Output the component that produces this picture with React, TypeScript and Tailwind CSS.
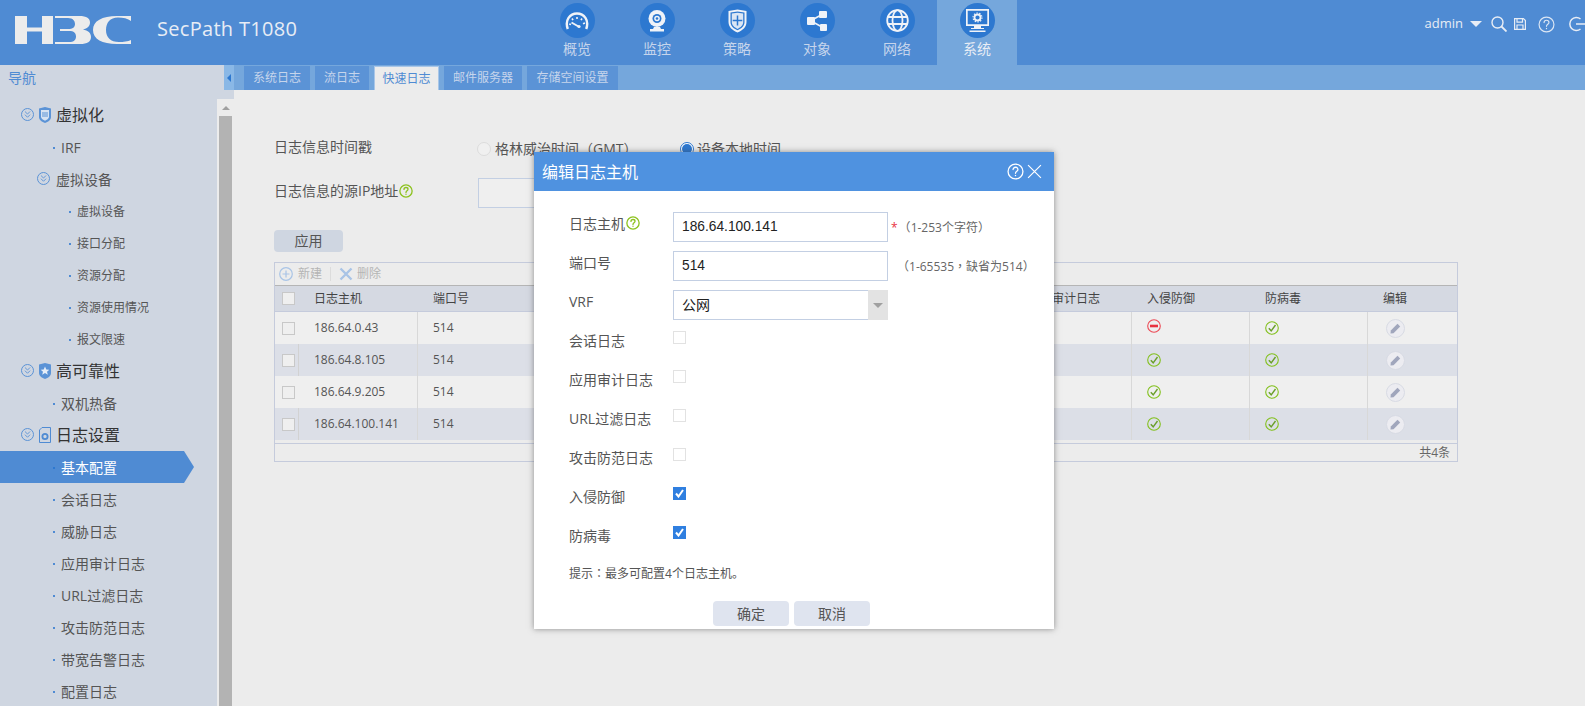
import { ChevronsDown } from 'lucide-react';

const font = '[font-family:"Open_Sans","Noto_Sans_CJK_SC",sans-serif]';
const centered = "[font-family:'Noto_Sans_CJK_TC',sans-serif]";

function H3cLogo() {
  return (
    <svg width="117" height="29" viewBox="0 0 117 29" fill="#ececec">
      {/* H */}
      <path d="M0 0h12v11.500h15V0h11v28H27V15.500H12V28H0z" />
      {/* 3 */}
      <path d="M40 0h24c8 0 11 2.500 11 6.500 0 3.500-2.500 6-7 7 5 .8 8 3.500 8 7.500 0 4.500-3.500 7-11 7H40v-2h14c5 0 7-2 7-5.500 0-3.500-2-5.500-7-5.500H45v-2h8c5 0 7-2 7-5s-2-6-7-6H40z" />
      {/* C */}
      <path d="M116 0v5c-3-2.500-8-3.500-13-3.500-8 0-12 5-12 12.500s4.500 12 13 12c4.500 0 9-.5 12-2v4H102C87 28 78 23 78 14S87 0 102 0z" />
    </svg>
  );
}

function GaugeIcon() {
  return (
    <svg width="24" height="18" viewBox="0 0 24 18" fill="none" stroke="#f0f3f8" strokeWidth="2.400">
      <path d="M2.800 17C-.5 8 5 1.500 12 1.500S24.500 8 21.200 17" />
      <path d="M6.500 10.500 13.500 14.500" strokeWidth="2" />
      <path d="M12 5v2M7 6.500l1 1.700M17 6.500l-1 1.700M20 11l-2 .8M4.200 12l1.800.5" strokeWidth="1.600" />
      <circle cx="14" cy="14.500" r="1.600" fill="#f0f3f8" stroke="none" />
    </svg>
  );
}

function CameraIcon() {
  return (
    <svg width="20" height="22" viewBox="0 0 20 22" fill="none">
      <circle cx="10" cy="8.500" r="8.500" fill="#f0f3f8" />
      <circle cx="10" cy="8.500" r="4.500" fill="#2d78d0" />
      <circle cx="10" cy="8.500" r="2.800" fill="#f0f3f8" />
      <circle cx="10" cy="8.500" r="1.300" fill="#2d78d0" />
      <path d="M7 17h6l1 2h3v2.500H3V19h3z" fill="#f0f3f8" />
    </svg>
  );
}

function ShieldIcon() {
  return (
    <svg width="19" height="24" viewBox="0 0 19 24" fill="none">
      <path d="M.5 2 9.500 .5 18.500 2v11c0 5-4 8.500-9 10.500-5-2-9-5.500-9-10.500z" fill="#f0f3f8" />
      <path d="M2.500 3.500 9.500 2.500l7 1V13c0 4-3 6.500-7 8.300-4-1.800-7-4.300-7-8.300z" fill="#2d78d0" />
      <path d="M3.800 4.600 9.500 3.800l5.700.8V13c0 3.300-2.500 5.300-5.700 6.900C6.300 18.300 3.800 16.300 3.800 13z" fill="#dbe6f4" />
      <path d="M9.500 6.500v10M4.700 11.500h9.600" stroke="#2d78d0" strokeWidth="1.500" />
    </svg>
  );
}

function ShareIcon() {
  return (
    <svg width="20" height="20" viewBox="0 0 20 20" fill="#f0f3f8">
      <path d="M5 9 15 3.500M5 10.500 15 16" stroke="#f0f3f8" strokeWidth="1.500" />
      <rect x="0" y="6" width="8" height="8" rx="1" />
      <rect x="12" y="0" width="8" height="7" rx="1" />
      <rect x="13" y="13" width="7" height="7" rx="1" />
    </svg>
  );
}

function GlobeIcon() {
  return (
    <svg width="23" height="23" viewBox="0 0 23 23" fill="none" stroke="#f0f3f8" strokeWidth="1.800">
      <circle cx="11.500" cy="11.500" r="10.300" />
      <ellipse cx="11.500" cy="11.500" rx="5" ry="10.300" />
      <path d="M1.500 8h20M1.500 15h20" />
    </svg>
  );
}

function MonitorIcon() {
  return (
    <svg width="23" height="24" viewBox="0 0 23 24" fill="none">
      <path d="M.8 .8h21.400v15.400H.8z" stroke="#f0f3f8" strokeWidth="1.800" fill="#2d78d0" />
      <path d="M5 19h13v1H5zM3.500 21.500h16V23h-16z" fill="#f0f3f8" />
      <rect x="8" y="16" width="7" height="3" fill="#f0f3f8" />
      <circle cx="11.500" cy="8.500" r="3" stroke="#f0f3f8" strokeWidth="1.800" />
      <circle cx="11.500" cy="8.500" r="4.500" stroke="#f0f3f8" strokeWidth="1.100" strokeDasharray="1.400 1.400" />
    </svg>
  );
}

function HelpCircle({ size, color, width = 1.5 }: { size: number; color: string; width?: number }) {
  return (
    <svg width={size} height={size} viewBox="0 0 16 16" fill="none" stroke={color} strokeWidth={width} className="shrink-0">
      <circle cx="8" cy="8" r="7" />
      <path d="M5.700 6.200C5.700 4.800 6.700 4 8 4s2.300.8 2.300 2c0 1.800-2.300 1.800-2.300 3.700" strokeLinecap="round" />
      <path d="M8 11.200v1.200" />
    </svg>
  );
}

function OkIcon() {
  return (
    <svg width="14" height="14" viewBox="0 0 14 14" fill="none">
      <circle cx="7" cy="7" r="6.300" stroke="#82c01c" strokeWidth="1.100" />
      <path d="M3.800 7.200 6.200 9.800 10.500 4" stroke="#6a9f2a" strokeWidth="1.400" />
    </svg>
  );
}

function BlockIcon() {
  return (
    <svg width="14" height="14" viewBox="0 0 14 14" fill="none">
      <circle cx="7" cy="7" r="6.300" stroke="#ec4a55" strokeWidth="1.100" />
      <rect x="3" y="5.700" width="8" height="2.600" fill="#e8323f" />
    </svg>
  );
}

function EditIcon() {
  return (
    <div className="flex h-[19px] w-[19px] items-center justify-center rounded-full border border-[#d8dbe4] bg-[#ececf1]">
      <svg width="11" height="11" viewBox="0 0 11 11" fill="#a0a6bc">
        <path d="M7.500 .8 10.200 3.500 3.500 10.200 .5 10.500 .8 7.500z" />
      </svg>
    </div>
  );
}

function CheckBox({ checked, muted }: { checked?: boolean; muted?: boolean }) {
  if (checked) {
    return (
      <div className="flex h-[13px] w-[13px] items-center justify-center bg-[#2f7fe0]">
        <svg width="9" height="9" viewBox="0 0 9 9" fill="none" stroke="#fff" strokeWidth="2">
          <path d="M1 4.500 3.500 7.500 8 1" />
        </svg>
      </div>
    );
  }
  return <div className={`h-[13px] w-[13px] border ${muted ? 'border-[#e2e2e2] bg-white' : 'border-[#c8c8c8] bg-[#efefef]'}`} />;
}

function ShieldSmall({ kind }: { kind: 'v' | 's' | 'f' }) {
  if (kind === 'f') {
    return (
      <svg width="12" height="16" viewBox="0 0 12 16" fill="none" stroke="#4f8bd3" strokeWidth="1">
        <path d="M3 .5h8.500v15H.5V3z" />
        <circle cx="6" cy="9.500" r="2.600" strokeWidth="1.800" />
      </svg>
    );
  }
  return (
    <svg width="12" height="16" viewBox="0 0 12 16">
      <path d="M0 1.500 6 0l6 1.500V10c0 3-3 5-6 6-3-1-6-3-6-6z" fill="#5b93d6" />
      {kind === 'v' ? (
        <path d="M2 3h8v7c0 1.500-2.300 3-4 3.800C4.300 13 2 11.500 2 10z" fill="#d6e2f2" />
      ) : (
        <path d="M6 3.500 7.300 6.500l3 .2-2.300 2 .8 3L6 10l-2.800 1.700.8-3-2.300-2 3-.2z" fill="#e6eef8" />
      )}
      {kind === 'v' && <path d="M4 5v5M6 5v5M8 5v5" stroke="#5b93d6" strokeWidth="1" />}
    </svg>
  );
}

function Toggle() {
  return (
    <div className="flex h-[13px] w-[13px] shrink-0 items-center justify-center rounded-full border border-[#5b93d6]">
      <ChevronsDown size={11} color="#5b93d6" strokeWidth={2} />
    </div>
  );
}

type NavEntry = { level: 'group' | 'sub' | 'leaf' | 'deep'; label: string; icon?: 'v' | 's' | 'f'; active?: boolean };

const navTree: NavEntry[] = [
  { level: 'group', label: '虚拟化', icon: 'v' },
  { level: 'leaf', label: 'IRF' },
  { level: 'sub', label: '虚拟设备' },
  { level: 'deep', label: '虚拟设备' },
  { level: 'deep', label: '接口分配' },
  { level: 'deep', label: '资源分配' },
  { level: 'deep', label: '资源使用情况' },
  { level: 'deep', label: '报文限速' },
  { level: 'group', label: '高可靠性', icon: 's' },
  { level: 'leaf', label: '双机热备' },
  { level: 'group', label: '日志设置', icon: 'f' },
  { level: 'leaf', label: '基本配置', active: true },
  { level: 'leaf', label: '会话日志' },
  { level: 'leaf', label: '威胁日志' },
  { level: 'leaf', label: '应用审计日志' },
  { level: 'leaf', label: 'URL过滤日志' },
  { level: 'leaf', label: '攻击防范日志' },
  { level: 'leaf', label: '带宽告警日志' },
  { level: 'leaf', label: '配置日志' },
];

function NavRow({ item }: { item: NavEntry }) {
  if (item.level === 'group') {
    return (
      <div className="flex h-8 items-center pl-[21px] text-base text-[#333]">
        <div className="-mt-[2px]"><Toggle /></div>
        <div className="ml-[5px] flex w-[17px] justify-start"><ShieldSmall kind={item.icon!} /></div>
        <span>{item.label}</span>
      </div>
    );
  }
  if (item.level === 'sub') {
    return (
      <div className="flex h-8 items-center pl-[37px] pt-px text-sm text-[#555]">
        <div className="-mt-[3px]"><Toggle /></div>
        <span className="ml-[6px]">{item.label}</span>
      </div>
    );
  }
  if (item.level === 'deep') {
    return (
      <div className="flex h-8 items-center pl-[69px] pt-px text-xs text-[#555]">
        <span className="mr-[6px] h-[2px] w-[2px] bg-[#4f8bd3]" />
        <span>{item.label}</span>
      </div>
    );
  }
  if (item.active) {
    return (
      <div className="flex h-8 w-[194px] items-center bg-[#4f8bd3] pl-[53px] pt-px text-sm text-white [clip-path:polygon(0_0,184px_0,100%_50%,184px_100%,0_100%)]">
        <span className="mr-[6px] h-[2px] w-[2px] bg-[#2d78d0]" />
        <span>{item.label}</span>
      </div>
    );
  }
  return (
    <div className="flex h-8 items-center pl-[53px] pt-px text-sm text-[#555]">
      <span className="mr-[6px] h-[2px] w-[2px] bg-[#4f8bd3]" />
      <span>{item.label}</span>
    </div>
  );
}

const topMenu = [
  { label: '概览', icon: <GaugeIcon /> },
  { label: '监控', icon: <CameraIcon /> },
  { label: '策略', icon: <ShieldIcon /> },
  { label: '对象', icon: <ShareIcon /> },
  { label: '网络', icon: <GlobeIcon /> },
  { label: '系统', icon: <MonitorIcon />, active: true },
];

const tabs = [
  { label: '系统日志', w: 'w-[66px]' },
  { label: '流日志', w: 'w-[54px]' },
  { label: '快速日志', w: 'w-[65px]', active: true },
  { label: '邮件服务器', w: 'w-[78px]' },
  { label: '存储空间设置', w: 'w-[91px]' },
];

const gridCols = 'grid-cols-[24px_119px_119px_119px_119px_119px_119px_119px_118px_118px_1fr]';

const hosts = [
  { host: '186.64.0.43', blocked: true },
  { host: '186.64.8.105' },
  { host: '186.64.9.205' },
  { host: '186.64.100.141' },
];

const headCols = ['日志主机', '端口号', '', '', '', '', '应用审计日志', '入侵防御', '防病毒', '编辑'];

function HostTable() {
  return (
    <div className="mt-[10px] w-[1184px] border border-[#c5cbdc] text-xs text-[#555]">
      <div className="flex h-[22px] items-center pl-[4px] text-[#b5b5b5]">
        <svg width="14" height="14" viewBox="0 0 14 14" fill="none" stroke="#a9c4e6" strokeWidth="1.200">
          <circle cx="7" cy="7" r="6.300" />
          <path d="M7 3.500v7M3.500 7h7" />
        </svg>
        <span className="ml-[5px]">新建</span>
        <span className="mx-[8px] h-[14px] w-px bg-[#dcdcdc]" />
        <svg width="14" height="14" viewBox="0 0 14 14" fill="none" stroke="#a9c4e6" strokeWidth="2.400">
          <path d="M1.500 1.500l11 11M12.500 1.500l-11 11" />
        </svg>
        <span className="ml-[4px]">删除</span>
      </div>
      <div className={`grid h-[27px] ${gridCols} items-center border-y border-t-[#b5b5b5] border-b-[#c5cbdc] bg-[#d5d9e2] text-[#444]`}>
        <div className="pl-[7px]"><CheckBox /></div>
        {headCols.map((c, i) => (
          <div key={i} className="pl-[15px]">{c}</div>
        ))}
      </div>
      {hosts.map((row, i) => (
        <div key={row.host} className={`grid h-8 ${gridCols} ${i % 2 ? 'bg-[#dcdfe7]' : 'bg-[#efefef]'}`}>
          <div className={`flex items-center pl-[7px] ${i % 2 ? 'border-r border-[#d2d2d2]' : ''}`}><CheckBox /></div>
          <div className="flex items-center border-r border-[#d8d8d8] pl-[15px]">{row.host}</div>
          <div className="flex items-center border-r border-[#d8d8d8] pl-[15px]">514</div>
          <div className="border-r border-[#d8d8d8]" />
          <div className="border-r border-[#d8d8d8]" />
          <div className="border-r border-[#d8d8d8]" />
          <div className="border-r border-[#d8d8d8]" />
          <div className="border-r border-[#d8d8d8]" />
          <div className={`flex border-r border-[#d8d8d8] pl-[15px] ${row.blocked ? 'items-start pt-[7px]' : 'items-center'}`}>
            {row.blocked ? <BlockIcon /> : <OkIcon />}
          </div>
          <div className="flex items-center border-r border-[#d8d8d8] pl-[15px]"><OkIcon /></div>
          <div className="flex items-center pl-[18px]"><EditIcon /></div>
        </div>
      ))}
      <div className="mt-[3px] flex h-[18px] items-center justify-end border-t border-[#c5cbdc] pr-[7px] text-[#666]">共4条</div>
    </div>
  );
}

function FieldRow({ label, children }: { label: React.ReactNode; children: React.ReactNode }) {
  return (
    <div className="flex h-[39px] items-start">
      <div className="flex h-6 w-[104px] items-center text-sm leading-6 text-[#555]">{label}</div>
      {children}
    </div>
  );
}

function TextBox({ value }: { value: string }) {
  return (
    <div className="flex h-[30px] w-[215px] items-center border border-[#c3cfe3] bg-white pl-[8px] text-[13.75px] text-[#222] [font-family:'Liberation_Sans','Noto_Sans_CJK_SC',sans-serif]">
      {value}
    </div>
  );
}

function EditDialog() {
  return (
    <div className="absolute left-[534px] top-[152px] h-[477px] w-[520px] bg-white shadow-[0_0_6px_rgba(60,60,60,0.55)]">
      <div className="flex h-[39px] items-center justify-between bg-[#4f92e0] pl-[8px] pr-[12px] text-base text-white">
        <span>编辑日志主机</span>
        <div className="flex items-center gap-[3px]">
          <HelpCircle size={17} color="#fff" width={1.2} />
          <svg width="15" height="15" viewBox="0 0 14 14" fill="none" stroke="#fff" strokeWidth="1.100">
            <path d="M1 1l12 12M13 1L1 13" />
          </svg>
        </div>
      </div>
      <div className="pl-[35px] pt-[21px]">
        <FieldRow label={<><span>日志主机</span><span className="ml-px -mt-[3px]"><HelpCircle size={14} color="#8dc21f" /></span></>}>
          <TextBox value="186.64.100.141" />
          <span className="ml-[3px] mt-[5px] text-xs leading-5 text-[#666]">
            <span className="text-[#e8323f]">*</span>
            <span className={`${centered} ml-[1px]`}>（</span>1-253个字符<span className={centered}>）</span>
          </span>
        </FieldRow>
        <FieldRow label="端口号">
          <TextBox value="514" />
          <span className="ml-[9px] mt-[5px] text-xs leading-5 text-[#666]">
            <span className={centered}>（</span>1-65535<span className={centered}>，</span>缺省为514<span className={centered}>）</span>
          </span>
        </FieldRow>
        <FieldRow label="VRF">
          <div className="flex h-[30px] w-[215px] border border-[#c3cfe3] bg-white">
            <div className="flex flex-1 items-center pl-[8px] text-sm text-[#222]">公网</div>
            <div className="-my-px -mr-px flex w-[20px] items-center justify-center bg-[#e3e3e3]">
              <div className="h-0 w-0 border-x-[5px] border-t-[5px] border-x-transparent border-t-[#a0a0a0]" />
            </div>
          </div>
        </FieldRow>
        {['会话日志', '应用审计日志', 'URL过滤日志', '攻击防范日志'].map((l) => (
          <FieldRow key={l} label={l}>
            <div className="mt-[2px]"><CheckBox muted /></div>
          </FieldRow>
        ))}
        {['入侵防御', '防病毒'].map((l) => (
          <FieldRow key={l} label={l}>
            <div className="mt-[2px]"><CheckBox checked /></div>
          </FieldRow>
        ))}
        <div className="text-xs leading-5 text-[#555]">提示<span className={centered}>：</span>最多可配置4个日志主机。</div>
        <div className="ml-[144px] mt-[17px] flex gap-[5px]">
          <button className="h-[25px] w-[76px] rounded-sm bg-[#dfe4ef] text-sm text-[#555]">确定</button>
          <button className="h-[25px] w-[76px] rounded-sm bg-[#dfe4ef] text-sm text-[#555]">取消</button>
        </div>
      </div>
    </div>
  );
}

export default function App() {
  return (
    <div className={`relative flex h-screen flex-col overflow-hidden bg-[#ececec] ${font}`}>
      {/* Top bar */}
      <header className="flex h-[65px] shrink-0 bg-[#4f8bd3]">
        <div className="ml-[15px] mt-[16px]"><H3cLogo /></div>
        <div className="ml-[25px] mt-[13px] w-[380px] text-xl leading-8 tracking-[0.3px] text-[#e8edf5]">SecPath T1080</div>
        <nav className="flex">
          {topMenu.map((m) => (
            <div key={m.label} className={`flex h-[65px] w-[80px] flex-col items-center pt-[3px] ${m.active ? 'bg-[#75a7dc] text-[#e8edf5]' : 'text-[#c6d5ec]'}`}>
              <div className="flex h-[35px] w-[35px] items-center justify-center rounded-full bg-[#2d78d0]">{m.icon}</div>
              <span className="mt-[1px] text-sm leading-5">{m.label}</span>
            </div>
          ))}
        </nav>
        <div className="ml-auto flex h-[48px] items-center pr-0 text-[#e8edf5]">
          <span className="text-[13px]">admin</span>
          <div className="ml-[7px] h-0 w-0 border-x-[6px] border-t-[6px] border-x-transparent border-t-[#e8edf5]" />
          <svg width="16" height="16" viewBox="0 0 16 16" fill="none" stroke="#e8edf5" strokeWidth="1.400" className="ml-[9px]">
            <circle cx="6.500" cy="6.500" r="5.500" />
            <path d="M10.500 10.500 15.500 15.500" strokeWidth="1.800" />
          </svg>
          <svg width="12" height="12" viewBox="0 0 12 12" fill="none" stroke="#e8edf5" strokeWidth="1.200" className="ml-[7px]">
            <path d="M.6.6h8.800l2 2v8.800H.6z" />
            <path d="M3 .6v3.500h5.500V.6M3 11.400V7h6v4.400" />
          </svg>
          <span className="ml-[12px]"><HelpCircle size={17} color="#dbe6f4" width={1.1} /></span>
          <svg width="16" height="16" viewBox="0 0 16 16" fill="none" stroke="#e8edf5" strokeWidth="1.500" className="ml-[14px]">
            <path d="M11.500 3A6.500 6.500 0 1 0 11.500 13" />
            <path d="M7 8h9" />
          </svg>
        </div>
      </header>

      <div className="flex min-h-0 flex-1">
        {/* Left navigation */}
        <aside className="flex w-[234px] shrink-0 flex-col bg-[#cfd6e1]">
          <div className="flex h-[25px] shrink-0 items-center justify-between pl-[8px] text-sm text-[#4f8bd3]">
            <span>导航</span>
            <div className="flex h-full w-[10px] items-center justify-center bg-[#8ab8e6]">
              <div className="h-0 w-0 border-y-[4px] border-r-[4px] border-y-transparent border-r-[#2d78d0]" />
            </div>
          </div>
          <div className="flex min-h-0 flex-1 pt-[9px]">
            <div className="w-[217px] shrink-0">
              {navTree.map((item, i) => (
                <NavRow key={i} item={item} />
              ))}
            </div>
            <div className="flex w-[17px] flex-col bg-[#ececec] pl-[2px] pr-[2px]">
              <div className="flex h-[17px] items-center justify-center">
                <div className="h-0 w-0 border-x-[4px] border-b-[4px] border-x-transparent border-b-[#a0a0a0]" />
              </div>
              <div className="flex-1 bg-[#b3b3b3]" />
            </div>
          </div>
        </aside>

        {/* Main area */}
        <main className="flex min-w-0 flex-1 flex-col">
          <div className="flex h-[25px] shrink-0 items-end gap-[5px] bg-[#75a7dc] pl-[10px] text-xs">
            {tabs.map((t) => (
              <div key={t.label} className={`flex h-[24px] ${t.w} items-center justify-center ${t.active ? 'border-x border-t border-[#a8c6e8] bg-[#ececec] text-[#4f8bd3]' : 'bg-[#5b93d6] text-[#c6d5ec]'}`}>
                {t.label}
              </div>
            ))}
          </div>
          <div className="pl-[40px] pt-[47px] text-sm text-[#555]">
            <div className="flex h-[20px] items-center">
              <span className="w-[203px]">日志信息时间戳</span>
              <div className="mr-[4px] mt-[4px] h-[14px] w-[14px] rounded-full border border-[#dcdcdc] bg-[#f0f0f0]" />
              <span className="mt-[3px] w-[185px]">格林威治时间<span className={centered}>（</span>GMT<span className={centered}>）</span></span>
              <div className="mr-[3px] mt-[4px] flex h-[14px] w-[14px] items-center justify-center rounded-full border border-[#2d78d0] bg-white">
                <div className="h-[10px] w-[10px] rounded-full bg-[#2d78d0]" />
              </div>
              <span className="mt-[3px]">设备本地时间</span>
            </div>
            <div className="mt-[21px] flex h-[30px] items-center">
              <div className="flex w-[204px] items-center -mt-[4px]">
                <span>日志信息的源IP地址</span>
                <span className="ml-px"><HelpCircle size={14} color="#8dc21f" /></span>
              </div>
              <div className="h-[30px] w-[120px] border border-[#c3cfe3] bg-[#efefef]" />
            </div>
            <button className="mt-[22px] h-[22px] w-[69px] rounded-sm bg-[#cfd6e1] text-sm text-[#555]">应用</button>
            <HostTable />
          </div>
        </main>
      </div>

      <EditDialog />
    </div>
  );
}
